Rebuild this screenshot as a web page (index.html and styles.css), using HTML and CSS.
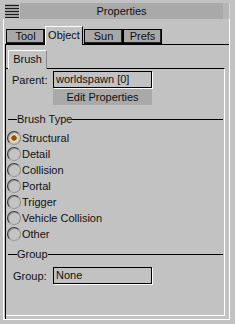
FILE: index.html
```html
<!DOCTYPE html>
<html lang="en">
<head>
  <meta charset="UTF-8">
  <title>Properties</title>
  <link rel="stylesheet" href="styles.css">
</head>
<body>
  <div class="window">
    <div class="titlebar">
      <div class="menu">
        <svg width="14" height="14" viewBox="0 0 14 14">
          <g stroke="#1a1a1a" stroke-width="1.4">
            <line x1="0" y1="1.5" x2="14" y2="1.5"/>
            <line x1="0" y1="4.5" x2="14" y2="4.5"/>
            <line x1="0" y1="7.5" x2="14" y2="7.5"/>
            <line x1="0" y1="10.5" x2="14" y2="10.5"/>
            <line x1="0" y1="13.5" x2="14" y2="13.5"/>
          </g>
        </svg>
      </div>
      <div class="title">Properties</div>
      <div class="title-end"></div>
    </div>

    <div class="frame">
      <div class="tabs">
        <div class="tab">Tool</div>
        <div class="tab active">Object</div>
        <div class="tab sun">Sun</div>
        <div class="tab">Prefs</div>
      </div>

      <div class="pane">
        <div class="subtabs">
          <div class="subtab">Brush</div>
        </div>

        <div class="subpane">
          <div class="row parent-row">
            <span class="label">Parent:</span>
            <div class="entry">worldspawn [0]</div>
          </div>
          <button class="button">Edit Properties</button>

          <div class="group-head brush-type">
            <span class="dash"></span>
            <span class="legend">Brush Type</span>
            <span class="rule"></span>
          </div>
          <div class="radios">
            <div class="radio checked"><span class="dot"></span>Structural</div>
            <div class="radio"><span class="dot"></span>Detail</div>
            <div class="radio"><span class="dot"></span>Collision</div>
            <div class="radio"><span class="dot"></span>Portal</div>
            <div class="radio"><span class="dot"></span>Trigger</div>
            <div class="radio"><span class="dot"></span>Vehicle Collision</div>
            <div class="radio"><span class="dot"></span>Other</div>
          </div>

          <div class="group-head group">
            <span class="dash"></span>
            <span class="legend">Group</span>
            <span class="rule"></span>
          </div>
          <div class="row group-row">
            <span class="label">Group:</span>
            <div class="entry">None</div>
          </div>
        </div>
      </div>
    </div>
  </div>
</body>
</html>
```

FILE: styles.css
```css
body {
  margin: 0;
  background: #c2c2c2;
  font-family: 'Liberation Sans', Arial, sans-serif;
  font-size: 11px;
  color: #111;
}

.window {
  margin: 3px 0 0 3px;
  width: 227px;
  height: 317px;
  display: flex;
  flex-direction: column;
}

.titlebar {
  display: flex;
  height: 16px;
}

.menu {
  width: 17px;
  display: flex;
  align-items: flex-start;
  padding: 1px 0 0 2px;
  box-sizing: border-box;
}

.title {
  flex: 1;
  background: #a9a9a9;
  text-align: center;
  line-height: 16px;
  font-size: 11px;
}

.title-end {
  width: 6px;
  background: #b6b6b6;
  border-right: 1px solid #d8d8d8;
}

.frame {
  flex: 1;
  display: flex;
  flex-direction: column;
  border-left: 1px solid #fff;
  border-right: 1px solid #fff;
  border-bottom: 1px solid #fff;
  padding: 7px 0 0 1px;
}

.tabs {
  display: flex;
  align-items: flex-end;
  height: 18px;
  padding-left: 1px;
}

.tab {
  width: 39px;
  height: 15px;
  box-sizing: border-box;
  background: #a8a8a8;
  border: 1px solid #000;
  box-shadow: inset -1px -1px 0 #222;
  text-align: center;
  line-height: 13px;
  font-size: 11px;
}

.tab.active {
  width: 38px;
  height: 19px;
  margin-bottom: -1px;
  position: relative;
  background: #c2c2c2;
  border: none;
  border-left: 1px solid #fff;
  border-top: 1px solid #fff;
  border-right: 1px solid #000;
  box-shadow: none;
  line-height: 16px;
}

.tab.sun {
  margin-left: 1px;
}

.pane {
  flex: 1;
  display: flex;
  flex-direction: column;
  border-left: 1px solid #000;
  border-top: 1px solid #000;
  padding: 5px 4px 3px 0;
}

.subtabs {
  display: flex;
  height: 18px;
  padding-left: 2px;
}

.subtab {
  width: 39px;
  height: 19px;
  box-sizing: border-box;
  position: relative;
  background: #c2c2c2;
  border-left: 1px solid #fff;
  border-top: 1px solid #fff;
  border-right: 1px solid #8a8a8a;
  text-align: center;
  line-height: 17px;
  font-size: 11px;
}

.subpane {
  flex: 1;
  border-top: 1px solid #000;
  border-right: 1px solid #fff;
  border-bottom: 1px solid #fff;
}

.row {
  display: flex;
  align-items: center;
}

.label {
  width: 41px;
}

.entry {
  width: 99px;
  height: 17px;
  box-sizing: border-box;
  border: 1px solid #000;
  box-shadow: 1px 1px 0 #fff;
  padding-left: 2px;
  line-height: 15px;
}

.parent-row {
  margin: 2px 0 0 6px;
}

.button {
  display: block;
  margin-left: 47px;
  width: 99px;
  height: 17px;
  border: none;
  padding: 0;
  background: #a9a9a9;
  font-family: inherit;
  font-size: 11px;
  color: #111;
}

.group-head {
  display: flex;
  align-items: center;
  height: 12px;
  margin-left: 2px;
  margin-right: 1px;
}

.group-head .dash {
  width: 9px;
  border-top: 1px solid #000;
}

.group-head .rule {
  flex: 1;
  border-top: 1px solid #000;
}

.legend {
  line-height: 12px;
}

.brush-type {
  margin-top: 8px;
}

.radios {
  margin-top: 5px;
}

.radio {
  display: flex;
  align-items: center;
  height: 16px;
  margin-left: 1px;
}

.radio .dot {
  width: 14px;
  height: 14px;
  box-sizing: border-box;
  border-radius: 50%;
  border: 1px solid;
  border-color: #3c3c3c #8c8c8c #9a9a9a #3c3c3c;
  background: #c4c4c4;
  box-shadow: inset 1px 1px 0 #9c9c9c;
  margin-right: 1px;
}

.radio.checked .dot {
  background: radial-gradient(circle, #8f520c 0, #8f520c 2.4px, #e6d7b2 3px, #e6d7b2 4.4px, #c4c4c4 5px);
}

.group {
  margin-top: 6px;
}

.group-row {
  margin: 7px 0 0 7px;
}

.group-row .label {
  width: 40px;
}
```
